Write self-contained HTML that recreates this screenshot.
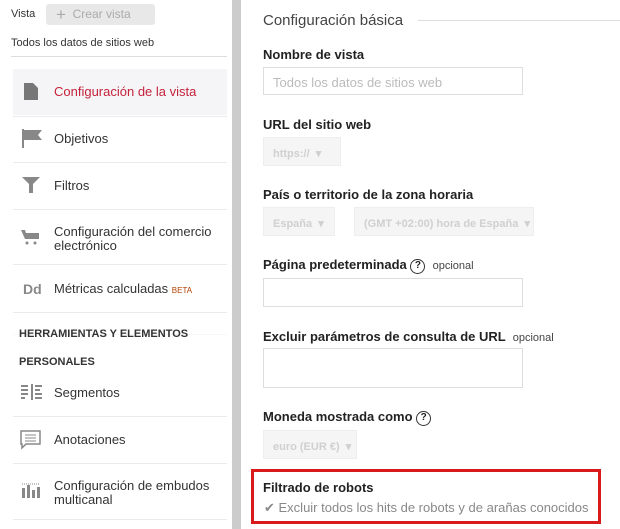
<!DOCTYPE html>
<html><head><meta charset="utf-8"><style>
*{margin:0;padding:0;box-sizing:border-box}
body{width:620px;height:529px;overflow:hidden;background:#fff;font-family:"Liberation Sans",sans-serif;color:#333;position:relative}
.a{position:absolute;white-space:nowrap}
.sep{position:absolute;left:13px;width:214px;height:1px;background:#ebebeb}
.it{position:absolute;left:54px;font-size:13px;color:#333;line-height:14px}
.lb{position:absolute;left:263px;font-size:13px;font-weight:bold;color:#222}
.box{position:absolute;border:1px solid #ddd;background:#fff}
.sel{position:absolute;background:#f5f5f5;border:1px solid #eee;font-size:11px;font-weight:bold;color:#d0d0d0;padding:9px 0 0 9px}
.q{display:inline-block;width:15px;height:15px;border:1.5px solid #333;border-radius:50%;font-size:10px;text-align:center;line-height:12px;font-weight:bold;vertical-align:1px}
.op{font-size:11px;font-weight:normal;color:#444}
</style></head><body>
<div class="a" style="left:11px;top:8px;font-size:11px;color:#333">Vista</div>
<div class="a" style="left:46px;top:4px;width:109px;height:21px;background:#e8e8e8;border-radius:3px;font-size:12px;color:#aaa;padding:3px 0 0 10px"><span style="font-size:17px;line-height:12px;vertical-align:-2px">+</span>&nbsp;&nbsp;Crear vista</div>
<div class="a" style="left:11px;top:37px;font-size:11px;color:#333">Todos los datos de sitios web</div>
<div class="a" style="left:11px;top:56px;width:216px;height:1px;background:#ddd"></div>
<div class="a" style="left:13px;top:69px;width:214px;height:46px;background:#f5f5f7"></div>
<svg class="a" style="left:24px;top:83px" width="14" height="17"><path d="M0 0H9L14 5V17H0Z" fill="#777"/></svg>
<div class="it" style="top:85px;color:#c5223b">Configuración de la vista</div>
<div class="sep" style="top:116px"></div>
<svg class="a" style="left:22px;top:129px" width="20" height="19"><rect x="0" y="0" width="2" height="19" fill="#888"/><path d="M2 1H20L16 6L20 11H2Z" fill="#888"/></svg>
<div class="it" style="top:132px">Objetivos</div>
<div class="sep" style="top:162px"></div>
<svg class="a" style="left:22px;top:177px" width="18" height="16"><path d="M0 0H18L11 7V16H7V7Z" fill="#888"/></svg>
<div class="it" style="top:179px">Filtros</div>
<div class="sep" style="top:209px"></div>
<svg class="a" style="left:21px;top:229px" width="18" height="16"><path d="M0 1H4L5 4H18V10H4Z" fill="#888"/><circle cx="6" cy="14" r="1.5" fill="#888"/><circle cx="14" cy="14" r="1.5" fill="#888"/></svg>
<div class="it" style="top:225px">Configuración del comercio<br>electrónico</div>
<div class="sep" style="top:264px"></div>
<div class="a" style="left:23px;top:281px;font-size:14px;font-weight:bold;color:#888">Dd</div>
<div class="it" style="top:282px">Métricas calculadas <span style="font-size:8px;color:#b04000">BETA</span></div>
<div class="sep" style="top:312px"></div>
<div class="sep" style="top:334px;background:#f7f7f7"></div>
<div class="a" style="left:19px;top:328px;font-size:11px;font-weight:bold;color:#333">HERRAMIENTAS Y ELEMENTOS</div>
<div class="a" style="left:19px;top:356px;font-size:11px;font-weight:bold;color:#333">PERSONALES</div>
<svg class="a" style="left:21px;top:384px" width="22" height="16" fill="#888"><rect x="0" y="1" width="7" height="2"/><rect x="0" y="5" width="7" height="2"/><rect x="0" y="9" width="7" height="2"/><rect x="0" y="13" width="4" height="2"/><rect x="10" y="0" width="2" height="16"/><rect x="14" y="1" width="7" height="2"/><rect x="14" y="5" width="5" height="2"/><rect x="14" y="9" width="7" height="2"/><rect x="14" y="13" width="7" height="2"/></svg>
<div class="it" style="top:386px">Segmentos</div>
<div class="sep" style="top:416px"></div>
<svg class="a" style="left:20px;top:430px" width="21" height="20"><path d="M1 1H20V14H6L2 18V14H1Z" fill="none" stroke="#888" stroke-width="1.5"/><path d="M5 5H16M5 8H16M5 11H16" stroke="#888"/></svg>
<div class="it" style="top:433px">Anotaciones</div>
<div class="sep" style="top:463px"></div>
<svg class="a" style="left:22px;top:482px" width="18" height="16" fill="#888"><rect x="0" y="6" width="3" height="10"/><rect x="5" y="3" width="3" height="13"/><rect x="10" y="8" width="3" height="8"/><rect x="15" y="5" width="3" height="11"/><path d="M0 2H18" stroke="#888" stroke-dasharray="1 1"/></svg>
<div class="it" style="top:479px">Configuración de embudos<br>multicanal</div>
<div class="sep" style="top:519px"></div>

<div class="a" style="left:232px;top:0;width:9px;height:529px;background:#ccc"></div>

<div class="a" style="left:263px;top:12px;font-size:15px;color:#444">Configuración básica</div>
<div class="a" style="left:418px;top:20px;width:202px;height:1px;background:#ddd"></div>
<div class="lb" style="top:47px">Nombre de vista</div>
<div class="box" style="left:263px;top:67px;width:260px;height:28px;font-size:13px;color:#bbb;padding:7px 0 0 9px">Todos los datos de sitios web</div>
<div class="lb" style="top:117px">URL del sitio web</div>
<div class="sel" style="left:263px;top:137px;width:78px;height:29px">https:// &nbsp;▾</div>
<div class="lb" style="top:187px">País o territorio de la zona horaria</div>
<div class="sel" style="left:263px;top:207px;width:72px;height:29px">España &nbsp;▾</div>
<div class="sel" style="left:354px;top:207px;width:180px;height:29px">(GMT +02:00) hora de España &nbsp;▾</div>
<div class="lb" style="top:257px">Página predeterminada <span class="q">?</span>&nbsp; <span class="op">opcional</span></div>
<div class="box" style="left:263px;top:278px;width:260px;height:29px"></div>
<div class="lb" style="top:329px">Excluir parámetros de consulta de URL &nbsp;<span class="op">opcional</span></div>
<div class="box" style="left:263px;top:348px;width:260px;height:40px"></div>
<div class="lb" style="top:409px">Moneda mostrada como <span class="q">?</span></div>
<div class="sel" style="left:263px;top:430px;width:94px;height:29px">euro (EUR €) &nbsp;▾</div>
<div class="a" style="left:251px;top:469px;width:350px;height:55px;border:3px solid #d91a1a"></div>
<div class="lb" style="top:480px">Filtrado de robots</div>
<div class="a" style="left:264px;top:500px;font-size:13px;color:#888">✔ Excluir todos los hits de robots y de arañas conocidos</div>
</body></html>
